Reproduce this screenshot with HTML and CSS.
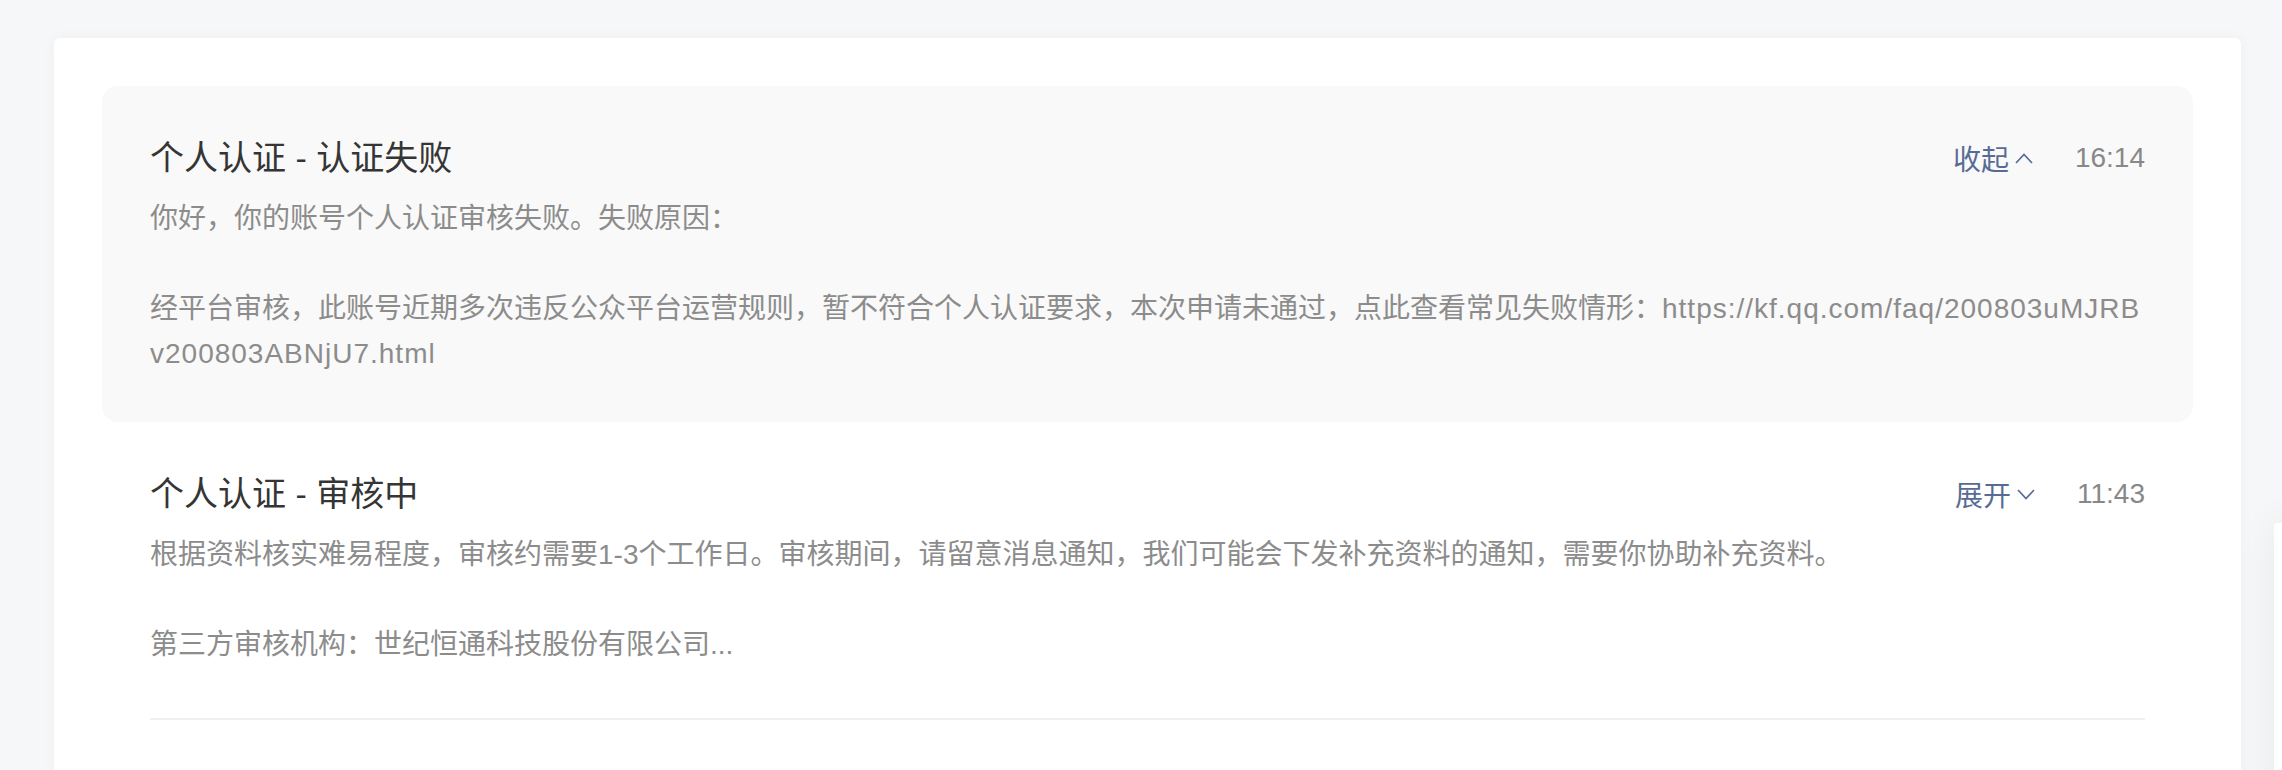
FILE: index.html
```html
<!DOCTYPE html>
<html lang="zh-CN">
  <head>
    <meta charset="UTF-8" />
    <meta name="viewport" content="width=device-width, initial-scale=1.0" />
    <title>消息通知</title>

    <link rel="stylesheet" href="styles.css">
  </head>

  <body>
    <main class="page">
      <section class="card">
        <article class="msg open">
          <div class="msg-inner">
            <header class="msg-head">
              <h2 class="msg-title">个人认证 - 认证失败</h2>
              <div class="msg-meta">
                <a class="toggle" href="#">收起
                  <svg width="18" height="12" viewBox="0 0 18 12"><polyline points="1,11 9,2.5 17,11" fill="none" stroke="currentColor" stroke-width="1.7" /></svg>
                </a>
                <span class="time">16:14</span>
              </div>
            </header>
            <p class="msg-body">你好，你的账号个人认证审核失败。失败原因：<br><br>经平台审核，此账号近期多次违反公众平台运营规则，暂不符合个人认证要求，本次申请未通过，点此查看常见失败情形：<span class="url">https://kf.qq.com/faq/200803uMJRBv200803ABNjU7.html</span></p>
          </div>
        </article>

        <article class="msg closed">
          <div class="msg-inner">
            <header class="msg-head">
              <h2 class="msg-title">个人认证 - 审核中</h2>
              <div class="msg-meta">
                <a class="toggle" href="#">展开
                  <svg width="18" height="12" viewBox="0 0 18 12"><polyline points="1,2 9,10.5 17,2" fill="none" stroke="currentColor" stroke-width="1.7" /></svg>
                </a>
                <span class="time">11:43</span>
              </div>
            </header>
            <p class="msg-body">根据资料核实难易程度，审核约需要1-3个工作日。审核期间，请留意消息通知，我们可能会下发补充资料的通知，需要你协助补充资料。<br><br>第三方审核机构：世纪恒通科技股份有限公司...</p>
          </div>
        </article>
      </section>
    </main>

    <!-- floating side panel, mostly off screen -->
    <aside class="side"></aside>
  </body>
</html>
```

FILE: styles.css
```css
body {
  margin: 0;
  background-color: #f6f7f9;
  font-family: "Liberation Sans", "Noto Sans CJK SC", sans-serif;
  overflow: hidden;
}

.page {
  padding: 38px 41px 0 54px;
}

.card {
  background-color: white;
  border-radius: 6px;
  padding: 48px 48px 120px;
  box-shadow: 0 0 14px rgba(0, 0, 0, 0.035);
}

.msg {
  padding: 0 48px;
  border-radius: 16px;
}
.msg.open {
  background-color: #f9f9f9;
}
.msg-inner {
  padding: 46px 0;
}
.msg.closed .msg-inner {
  padding-bottom: 51px;
  border-bottom: 2px solid #f0f0f0;
}

.msg-head {
  display: flex;
  justify-content: space-between;
  align-items: center;
}
.msg-title {
  margin: 0;
  font-size: 34px;
  line-height: 52px;
  font-weight: normal;
  color: #353535;
}
.msg-meta {
  display: flex;
  align-items: center;
  gap: 42px;
  font-size: 28px;
}
.toggle {
  display: flex;
  align-items: center;
  gap: 6px;
  color: #576b95;
  text-decoration: none;
}
.time {
  color: #888;
}

.msg-body {
  margin: 12px 0 0;
  font-size: 28px;
  line-height: 45px;
  color: #8c8c8c;
  word-break: break-all;
}
.url {
  letter-spacing: 1px;
}

.side {
  position: fixed;
  left: 2274px;
  top: 523px;
  width: 300px;
  height: 400px;
  background-color: white;
  border-radius: 4px;
  box-shadow: 0 0 40px rgba(0, 0, 0, 0.06);
}
```
